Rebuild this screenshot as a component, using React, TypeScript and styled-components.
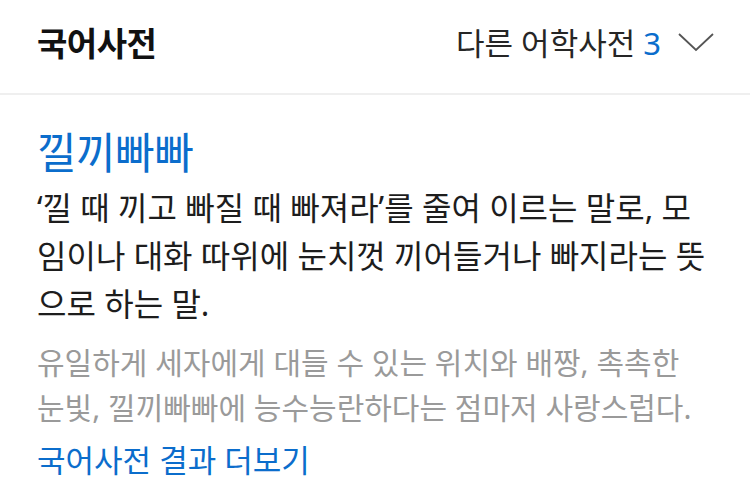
import styled, { createGlobalStyle } from "styled-components";

const GlobalStyle = createGlobalStyle`
  html, body {
    margin: 0;
    padding: 0;
    background: #fff;
  }
  body {
    font-family: "Noto Sans", "Noto Sans CJK KR", sans-serif;
    -webkit-font-smoothing: antialiased;
  }
`;

const blue = "#0b6dcc";

const Card = styled.section`
  width: 750px;
  background: #fff;
`;

const Header = styled.header`
  display: flex;
  align-items: center;
  justify-content: space-between;
  height: 95px;
  padding: 0 36px 10px 37px;
  box-sizing: border-box;
  border-bottom: 2px solid #efefef;
`;

const Title = styled.h1`
  margin: 0;
  font-size: 33px;
  font-weight: 700;
  color: #111;
  letter-spacing: -0.5px;
`;

const OtherDicts = styled.button`
  display: flex;
  align-items: center;
  gap: 17px;
  border: 0;
  background: none;
  padding: 0;
  font-family: inherit;
  font-size: 31px;
  color: #262626;
  cursor: pointer;
`;

const Count = styled.span`
  color: ${blue};
`;

const Body = styled.div`
  display: flex;
  flex-direction: column;
  padding: 29px 37px 0 37px;
`;

const Word = styled.h2`
  margin: 0;
  font-size: 43px;
  font-weight: 400;
  line-height: 58px;
  color: ${blue};
  letter-spacing: -0.5px;
`;

const Meaning = styled.p`
  margin: 2px 0 0;
  font-size: 32px;
  line-height: 48px;
  color: #1d1d1d;
  word-break: break-all;
`;

const Example = styled.p`
  margin: 12px 0 0;
  font-size: 30px;
  line-height: 45px;
  color: #9a9a9a;
  word-break: break-all;
`;

const MoreLink = styled.a`
  margin-top: 7px;
  font-size: 31px;
  line-height: 46px;
  color: ${blue};
  text-decoration: none;
`;

const Chevron = () => (
  <svg width="36" height="20" viewBox="0 0 36 20" fill="none">
    <path d="M1 2 L18 18 L35 2" stroke="#555" strokeWidth="1.8" />
  </svg>
);

export default function App() {
  return (
    <Card>
      <GlobalStyle />
      <Header>
        <Title>국어사전</Title>
        <OtherDicts>
          <span>
            다른 어학사전 <Count>3</Count>
          </span>
          <Chevron />
        </OtherDicts>
      </Header>
      <Body>
        <Word>낄끼빠빠</Word>
        <Meaning>
          ‘낄 때 끼고 빠질 때 빠져라’를 줄여 이르는 말로, 모임이나 대화 따위에 눈치껏 끼어들거나
          빠지라는 뜻으로 하는 말.
        </Meaning>
        <Example>
          유일하게 세자에게 대들 수 있는 위치와 배짱, 촉촉한 눈빛, 낄끼빠빠에 능수능란하다는
          점마저 사랑스럽다.
        </Example>
        <MoreLink href="#">국어사전 결과 더보기</MoreLink>
      </Body>
    </Card>
  );
}
